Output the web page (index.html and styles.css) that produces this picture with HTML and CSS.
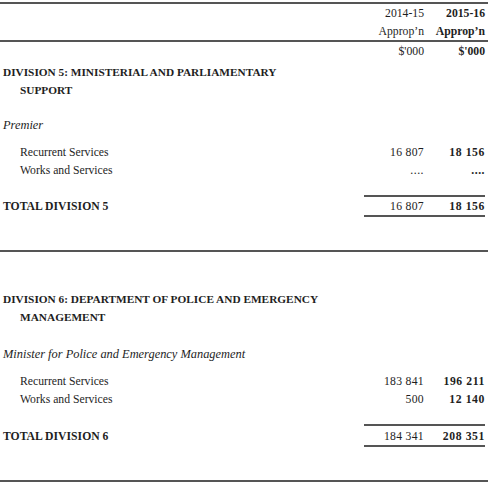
FILE: index.html
```html
<!DOCTYPE html>
<html>
<head>
<meta charset="utf-8">
<link rel="stylesheet" href="styles.css">
</head>
<body>
<div class="sheet">
  <div class="rule rule-top"></div>
  <div class="row head"><span></span><span class="num">2014-15</span><span class="num b">2015-16</span></div>
  <div class="row head"><span></span><span class="num">Approp’n</span><span class="num b">Approp’n</span></div>
  <div class="rule"></div>
  <div class="row units"><span></span><span class="num">$'000</span><span class="num b">$'000</span></div>

  <div class="division">
    <div class="row b"><span>DIVISION 5: MINISTERIAL AND PARLIAMENTARY</span></div>
    <div class="row b indent"><span>SUPPORT</span></div>
  </div>
  <div class="row minister"><span>Premier</span></div>
  <div class="items">
    <div class="row indent"><span>Recurrent Services</span><span class="num val">16 807</span><span class="num b val">18 156</span></div>
    <div class="row indent"><span>Works and Services</span><span class="num dots">....</span><span class="num b dots">....</span></div>
  </div>
  <div class="total">
    <div class="row"><span></span><span class="subrule"></span></div>
    <div class="row b tot"><span>TOTAL DIVISION 5</span><span class="num n val">16 807</span><span class="num val">18 156</span></div>
    <div class="row"><span></span><span class="subrule"></span></div>
  </div>
  <div class="rule rule-sec"></div>

  <div class="division d6">
    <div class="row b"><span>DIVISION 6: DEPARTMENT OF POLICE AND EMERGENCY</span></div>
    <div class="row b indent"><span>MANAGEMENT</span></div>
  </div>
  <div class="row minister m6"><span>Minister for Police and Emergency Management</span></div>
  <div class="items">
    <div class="row indent"><span>Recurrent Services</span><span class="num val">183 841</span><span class="num b val">196 211</span></div>
    <div class="row indent"><span>Works and Services</span><span class="num val">500</span><span class="num b val">12 140</span></div>
  </div>
  <div class="total t6">
    <div class="row"><span></span><span class="subrule"></span></div>
    <div class="row b tot"><span>TOTAL DIVISION 6</span><span class="num n val">184 341</span><span class="num val">208 351</span></div>
    <div class="row"><span></span><span class="subrule"></span></div>
  </div>
  <div class="rule rule-sec"></div>
</div>
</body>
</html>
```
FILE: styles.css
```css
html, body {
  margin: 0;
  padding: 0;
  background: #ffffff;
}
body {
  font-family: "Liberation Serif", "Times New Roman", serif;
  font-size: 11.7px;
  color: #1e1e1e;
}
.sheet {
  width: 491px;
  display: flex;
  flex-direction: column;
}
.rule {
  height: 2px;
  background: #555;
  margin-right: 3px;
}
.rule-top {
  margin-top: 2px;
}
.row {
  display: grid;
  grid-template-columns: 1fr 62px 61px;
  line-height: 20px;
  height: 18px;
  padding: 0 6px 0 3px;
  white-space: nowrap;
}
.num {
  text-align: right;
}
.b {
  font-weight: bold;
}
.n {
  font-weight: normal;
}
.val {
  letter-spacing: 0.3px;
}
.b.val, .tot .val:not(.n) {
  letter-spacing: 0.6px;
}
.indent > span:first-child {
  padding-left: 17px;
}
.division {
  margin-top: 2px;
  display: flex;
  flex-direction: column;
  font-size: 11.3px;
}
.division.d6 {
  margin-top: 37px;
}
.minister {
  font-style: italic;
  font-size: 12.4px;
  margin-top: 17px;
}
.minister.m6 {
  margin-top: 19px;
}
.items {
  margin-top: 10px;
  display: flex;
  flex-direction: column;
}
.dots {
  letter-spacing: 0.5px;
}
.total {
  margin-top: 16px;
  display: flex;
  flex-direction: column;
}
.total > .row:not(.tot) {
  height: 2px;
  line-height: 2px;
}
.total.t6 .tot {
  height: 19px;
  line-height: 22px;
}
.subrule {
  grid-column: 2 / 4;
  height: 2px;
  background: #555;
  margin-left: 2px;
}
.rule-sec {
  margin-top: 33px;
}
```
